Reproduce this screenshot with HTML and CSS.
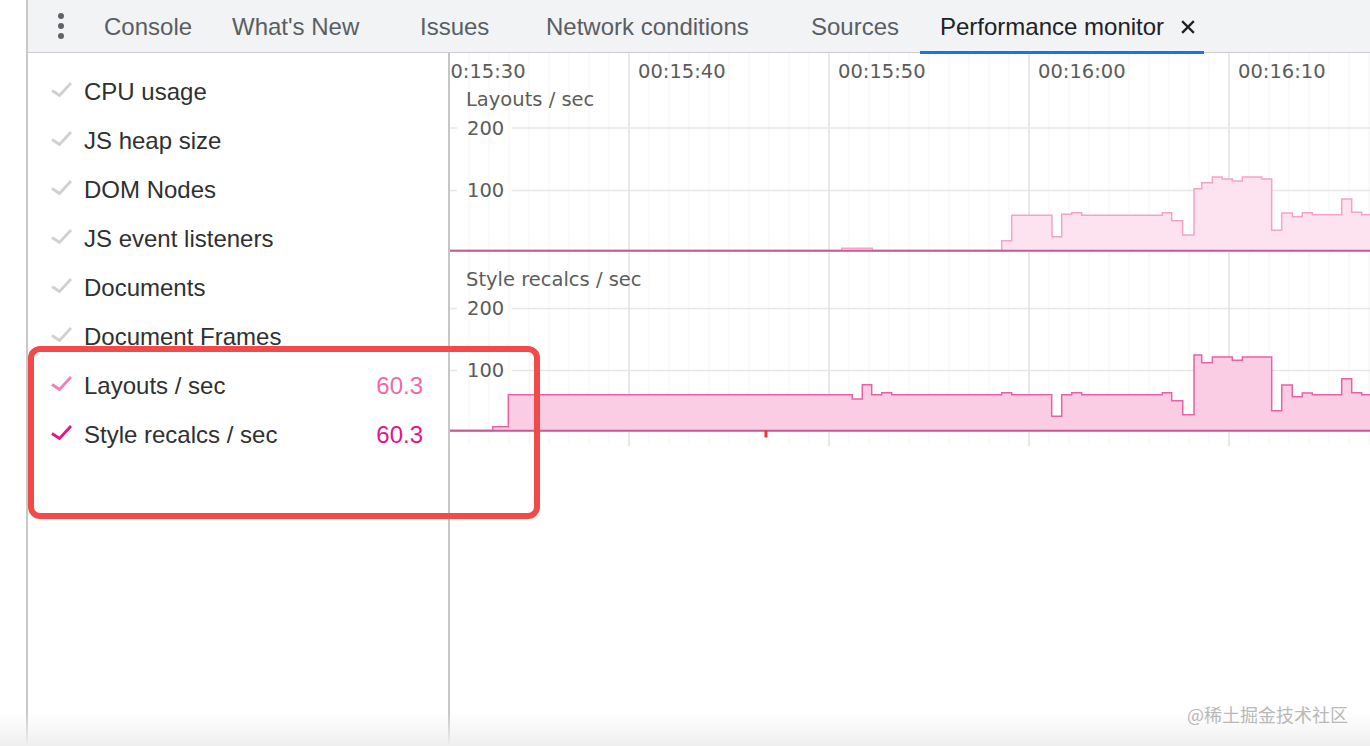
FILE: index.html
```html
<!DOCTYPE html>
<html>
<head>
<meta charset="utf-8">
<link rel="stylesheet" href="styles.css">
</head>
<body>
<div class="app">
  <div class="gutter"></div>
  <div class="main">
    <div class="toolbar">
      <div class="menu"><span class="dot"></span><span class="dot"></span><span class="dot"></span></div>
      <div class="tab t-console">Console</div>
      <div class="tab t-new">What's New</div>
      <div class="tab t-issues">Issues</div>
      <div class="tab t-network">Network conditions</div>
      <div class="tab t-sources">Sources</div>
      <div class="tab t-perf active">Performance monitor
        <svg class="close" width="14" height="14" viewBox="0 0 14 14"><path d="M2 2 L12 12 M12 2 L2 12" stroke="#202124" stroke-width="2.4" stroke-linecap="square" fill="none"/></svg>
      </div>
    </div>
    <div class="content">
      <div class="sidebar">
        <div class="row"><svg class="chk" width="22" height="16" viewBox="0 0 22 16"><path d="M2 9.5 L9.5 14.5 L21 2" /></svg><span class="label">CPU usage</span></div>
        <div class="row"><svg class="chk" width="22" height="16" viewBox="0 0 22 16"><path d="M2 9.5 L9.5 14.5 L21 2" /></svg><span class="label">JS heap size</span></div>
        <div class="row"><svg class="chk" width="22" height="16" viewBox="0 0 22 16"><path d="M2 9.5 L9.5 14.5 L21 2" /></svg><span class="label">DOM Nodes</span></div>
        <div class="row"><svg class="chk" width="22" height="16" viewBox="0 0 22 16"><path d="M2 9.5 L9.5 14.5 L21 2" /></svg><span class="label">JS event listeners</span></div>
        <div class="row"><svg class="chk" width="22" height="16" viewBox="0 0 22 16"><path d="M2 9.5 L9.5 14.5 L21 2" /></svg><span class="label">Documents</span></div>
        <div class="row"><svg class="chk" width="22" height="16" viewBox="0 0 22 16"><path d="M2 9.5 L9.5 14.5 L21 2" /></svg><span class="label">Document Frames</span></div>
        <div class="row on-light"><svg class="chk" width="22" height="16" viewBox="0 0 22 16"><path d="M2 9.5 L9.5 14.5 L21 2" /></svg><span class="label">Layouts / sec</span><span class="value">60.3</span></div>
        <div class="row on-dark"><svg class="chk" width="22" height="16" viewBox="0 0 22 16"><path d="M2 9.5 L9.5 14.5 L21 2" /></svg><span class="label">Style recalcs / sec</span><span class="value">60.3</span></div>
      </div>
      <div class="chart">
        <svg class="plot" width="920" height="400" viewBox="450 53 920 400">
          <g class="minor">
            <path d="M469 53V445M489 53V445M509 53V445M529 53V445M549 53V445M569 53V445M589 53V445M609 53V445M649 53V445M669 53V445M689 53V445M709 53V445M729 53V445M749 53V445M769 53V445M789 53V445M809 53V445M849 53V445M869 53V445M889 53V445M909 53V445M929 53V445M949 53V445M969 53V445M989 53V445M1009 53V445M1049 53V445M1069 53V445M1089 53V445M1109 53V445M1129 53V445M1149 53V445M1169 53V445M1189 53V445M1209 53V445M1249 53V445M1269 53V445M1289 53V445M1309 53V445M1329 53V445M1349 53V445M1369 53V445"/>
          </g>
          <g class="major">
            <path d="M629 53V446M829 53V446M1029 53V446M1229 53V446"/>
          </g>
          <g class="hgrid">
            <path d="M450 128H457M512 128H1370M450 190.5H457M512 190.5H1370M450 308.5H457M512 308.5H1370M450 370.5H457M512 370.5H1370"/>
          </g>
          <g class="axis">
            <text x="438" y="78">00:15:30</text>
            <text x="638" y="78">00:15:40</text>
            <text x="838" y="78">00:15:50</text>
            <text x="1038" y="78">00:16:00</text>
            <text x="1238" y="78">00:16:10</text>
            <text x="466" y="106">Layouts / sec</text>
            <text x="467" y="135">200</text>
            <text x="467" y="197">100</text>
            <text x="466" y="286">Style recalcs / sec</text>
            <text x="467" y="315">200</text>
            <text x="467" y="377">100</text>
          </g>
          <path class="fill1" d="M450 250.5 H841.7 V248.3 H872.3 V250.5 H1001.7 V240.7 H1011.7 V215.3 H1052 V236.7 H1061.7 V214.3 H1071.7 V212.7 H1081.7 V215.3 H1162.3 V212.7 H1171.7 V220.7 H1182.7 V235 H1194 V188.7 H1201.7 V182.7 H1212.3 V177 H1222.3 V179 H1232.3 V181 H1242.3 V177 H1261.7 V179 H1271.7 V230.3 H1281.7 V213 H1292.3 V216.7 H1302.3 V212.7 H1312.3 V214.7 H1341.7 V199 H1351.7 V212.3 H1361.7 V214.7 H1372 V250.5 Z"/>
          <path class="line1" d="M450 250.5 H841.7 V248.3 H872.3 V250.5 H1001.7 V240.7 H1011.7 V215.3 H1052 V236.7 H1061.7 V214.3 H1071.7 V212.7 H1081.7 V215.3 H1162.3 V212.7 H1171.7 V220.7 H1182.7 V235 H1194 V188.7 H1201.7 V182.7 H1212.3 V177 H1222.3 V179 H1232.3 V181 H1242.3 V177 H1261.7 V179 H1271.7 V230.3 H1281.7 V213 H1292.3 V216.7 H1302.3 V212.7 H1312.3 V214.7 H1341.7 V199 H1351.7 V212.3 H1361.7 V214.7 H1372"/>
          <path class="base" d="M450 250.7 H1372"/>
          <path class="fill2" d="M450 430.5 H492.7 V426.7 H508.3 V394.7 H852.3 V399 H862.3 V384.7 H871.7 V394.7 H881.7 V392.7 H891.7 V394.7 H1001.7 V392.7 H1011.7 V394.7 H1051.7 V416.3 H1061.7 V394.7 H1071.7 V392.7 H1081.7 V394.7 H1162.3 V392.7 H1171.7 V400.7 H1182.7 V414.7 H1194 V355 H1201.7 V362.7 H1212.3 V357 H1232.3 V360.3 H1242.3 V357 H1271.7 V410.7 H1281.7 V385 H1292.3 V396.7 H1302.3 V393 H1312.3 V394.7 H1341.7 V378.7 H1351.7 V392.7 H1361.7 V394.7 H1372 V430.5 Z"/>
          <path class="line2" d="M450 430.5 H492.7 V426.7 H508.3 V394.7 H852.3 V399 H862.3 V384.7 H871.7 V394.7 H881.7 V392.7 H891.7 V394.7 H1001.7 V392.7 H1011.7 V394.7 H1051.7 V416.3 H1061.7 V394.7 H1071.7 V392.7 H1081.7 V394.7 H1162.3 V392.7 H1171.7 V400.7 H1182.7 V414.7 H1194 V355 H1201.7 V362.7 H1212.3 V357 H1232.3 V360.3 H1242.3 V357 H1271.7 V410.7 H1281.7 V385 H1292.3 V396.7 H1302.3 V393 H1312.3 V394.7 H1341.7 V378.7 H1351.7 V392.7 H1361.7 V394.7 H1372"/>
          <path class="base" d="M450 430.7 H1372"/>
          <rect class="mark" x="764.5" y="430.5" width="3" height="7"/>
        </svg>
      </div>
    </div>
  </div>
  <div class="highlight"></div>
  <div class="fade"></div>
  <div class="watermark">@稀土掘金技术社区</div>
</div>
</body>
</html>
```

FILE: styles.css
```css
* { box-sizing: border-box; }
html, body {
  margin: 0;
  padding: 0;
  background: #fff;
}
body {
  width: 1370px;
  height: 746px;
  overflow: hidden;
  font-family: "Liberation Sans", Arial, sans-serif;
}
.app {
  position: relative;
  display: flex;
  width: 1370px;
  height: 746px;
}
.gutter {
  width: 28px;
  flex: none;
  background: #fff;
  border-right: 2px solid #c9c9c9;
}
.main {
  flex: 1;
  display: flex;
  flex-direction: column;
  min-width: 0;
}
.toolbar {
  height: 53px;
  flex: none;
  display: flex;
  align-items: stretch;
  background: #f1f3f4;
  border-bottom: 1px solid #cbcdd1;
}
.menu {
  width: 56px;
  padding-left: 10px;
  display: flex;
  flex-direction: column;
  align-items: center;
  justify-content: center;
  gap: 4px;
}
.dot {
  width: 6px;
  height: 6px;
  border-radius: 50%;
  background: #5f6368;
}
.tab {
  position: relative;
  display: flex;
  align-items: center;
  padding-left: 20px;
  padding-top: 2px;
  font-size: 24px;
  color: #5a5e63;
  white-space: nowrap;
}
.t-console { width: 128px; }
.t-new { width: 188px; }
.t-issues { width: 126px; }
.t-network { width: 265px; }
.t-sources { width: 129px; }
.t-perf { width: 284px; }
.tab.active { color: #202124; }
.tab.active::after {
  content: "";
  position: absolute;
  left: 0;
  right: 0;
  bottom: -2px;
  height: 3px;
  background: #1a73e8;
}
.close {
  margin-left: 17px;
  margin-bottom: 1px;
}
.content {
  flex: 1;
  display: flex;
  min-height: 0;
}
.sidebar {
  width: 422px;
  flex: none;
  border-right: 2px solid #c6c6c6;
  padding-top: 14px;
}
.row {
  height: 49px;
  display: flex;
  align-items: center;
  padding-left: 22px;
  padding-right: 25px;
  font-size: 24px;
  color: #303030;
}
.chk {
  flex: none;
  margin-right: 12px;
  margin-bottom: 5px;
  fill: none;
  stroke: #d0d0d0;
  stroke-width: 2.8;
}
.label { white-space: nowrap; }
.value { margin-left: auto; }
.on-light .chk { stroke: #f37db4; }
.on-light .value { color: #f06aa8; }
.on-dark .chk { stroke: #e6157f; }
.on-dark .value { color: #e5148a; }
.chart {
  flex: 1;
  overflow: hidden;
  background: #fff;
}
.plot { display: block; }
.minor path { stroke: #f4f4f4; stroke-width: 1; fill: none; }
.major path { stroke: #e2e2e2; stroke-width: 1.5; fill: none; }
.hgrid path { stroke: #e6e6e6; stroke-width: 1.5; fill: none; }
.axis text {
  font-family: "DejaVu Sans", Verdana, sans-serif;
  font-size: 19.5px;
  fill: #5c5c5c;
}
.fill1 { fill: #fde3ef; }
.line1 { fill: none; stroke: #f5a2c6; stroke-width: 1.5; }
.fill2 { fill: #fbcde5; }
.line2 { fill: none; stroke: #ea62a4; stroke-width: 1.5; }
.base { fill: none; stroke: #c55a8e; stroke-width: 2; }
.mark { fill: #e53935; }
.highlight {
  position: absolute;
  left: 28px;
  top: 346px;
  width: 512px;
  height: 173px;
  border: 6px solid #f04a4a;
  border-radius: 12px;
  pointer-events: none;
}
.fade {
  position: absolute;
  left: 0;
  right: 0;
  bottom: 0;
  height: 34px;
  background: linear-gradient(rgba(238,238,238,0), #efefef);
  pointer-events: none;
}
.watermark {
  position: absolute;
  right: 22px;
  bottom: 20px;
  font-family: "Noto Sans CJK SC", sans-serif;
  font-size: 18px;
  line-height: 24px;
  color: #b8b8b8;
}
```
